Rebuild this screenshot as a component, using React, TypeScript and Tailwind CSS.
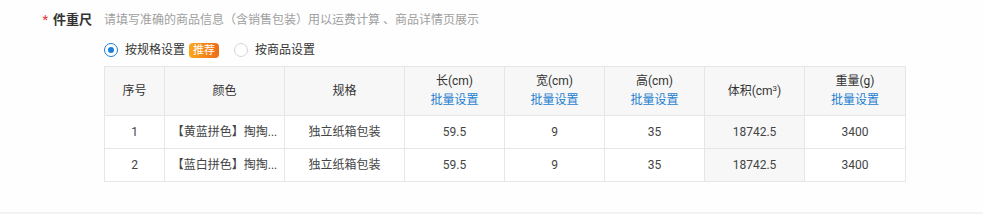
const rows = [
  { no: 1, color: '【黄蓝拼色】掏掏...', spec: '独立纸箱包装', l: '59.5', w: '9', h: '35', v: '18742.5', g: '3400' },
  { no: 2, color: '【蓝白拼色】掏掏...', spec: '独立纸箱包装', l: '59.5', w: '9', h: '35', v: '18742.5', g: '3400' },
];

function Radio({ checked, label }: { checked: boolean; label: string }) {
  return (
    <label className="flex items-center gap-[7px] cursor-pointer">
      <span
        className={
          checked
            ? 'flex h-[14px] w-[14px] items-center justify-center rounded-full border border-[#1f7fd8] bg-white'
            : 'h-[14px] w-[14px] rounded-full border border-[#d5d5d5] bg-white'
        }
      >
        {checked && <span className="h-[6px] w-[6px] rounded-full bg-[#1f7fd8]" />}
      </span>
      <span className="text-[12px] text-[#333]">{label}</span>
    </label>
  );
}

function HeadCell({ title, link }: { title: React.ReactNode; link?: boolean }) {
  return (
    <th className="border border-[#e6e6e6] bg-[#f7f7f7] p-0 font-normal text-[12px] leading-[19px] text-[#333]">
      <div>{title}</div>
      {link && <div className="cursor-pointer text-[#1f7fd0]">批量设置</div>}
    </th>
  );
}

export default function App() {
  return (
    <div
      className="h-[214px] w-full bg-[#fefefe]"
      style={{ fontFamily: 'Roboto, "Noto Sans CJK SC", sans-serif' }}
    >
      <div className="flex h-[212px] pt-[10px]">
        <div className="w-[92px] shrink-0 text-right text-[13px] leading-[20px]">
          <span className="mr-[5px] text-[#e8382f]">*</span>
          <span className="font-bold text-[#333]">件重尺</span>
        </div>
        <div className="ml-[12px]">
          <p className="text-[12px] leading-[20px] text-[#a0a0a0]">
            请填写准确的商品信息（含销售包装）用以运费计算 、商品详情页展示
          </p>
          <div className="mt-[10px] flex h-[20px] items-center">
            <Radio checked label="按规格设置" />
            <span className="ml-[4px] rounded-[4px] bg-gradient-to-r from-[#f9a61c] to-[#ef6b19] px-[4px] text-[11px] leading-[15px] text-white">
              推荐
            </span>
            <div className="ml-[15px]">
              <Radio checked={false} label="按商品设置" />
            </div>
          </div>
          <table className="mt-[6px] table-fixed border-collapse" style={{ width: 801 }}>
            <colgroup>
              <col className="w-[60px]" />
              <col className="w-[120px]" />
              <col className="w-[120px]" />
              <col className="w-[100px]" />
              <col className="w-[100px]" />
              <col className="w-[100px]" />
              <col className="w-[100px]" />
              <col className="w-[101px]" />
            </colgroup>
            <thead>
              <tr className="h-[49px]">
                <HeadCell title="序号" />
                <HeadCell title="颜色" />
                <HeadCell title="规格" />
                <HeadCell title="长(cm)" link />
                <HeadCell title="宽(cm)" link />
                <HeadCell title="高(cm)" link />
                <HeadCell title={<>体积(cm<sup className="text-[8px]">3</sup>)</>} />
                <HeadCell title="重量(g)" link />
              </tr>
            </thead>
            <tbody>
              {rows.map((r) => (
                <tr key={r.no} className="h-[33px] text-center text-[12px] text-[#444]">
                  <td className="border border-[#e6e6e6] bg-white p-0">{r.no}</td>
                  <td className="border border-[#e6e6e6] bg-white p-0">{r.color}</td>
                  <td className="border border-[#e6e6e6] bg-white p-0">{r.spec}</td>
                  <td className="border border-[#e6e6e6] bg-white p-0">{r.l}</td>
                  <td className="border border-[#e6e6e6] bg-white p-0">{r.w}</td>
                  <td className="border border-[#e6e6e6] bg-white p-0">{r.h}</td>
                  <td className="border border-[#e6e6e6] bg-[#f7f7f7] p-0">{r.v}</td>
                  <td className="border border-[#e6e6e6] bg-white p-0">{r.g}</td>
                </tr>
              ))}
            </tbody>
          </table>
        </div>
      </div>
      <div className="h-[2px] bg-[#f3f3f3]" />
    </div>
  );
}
